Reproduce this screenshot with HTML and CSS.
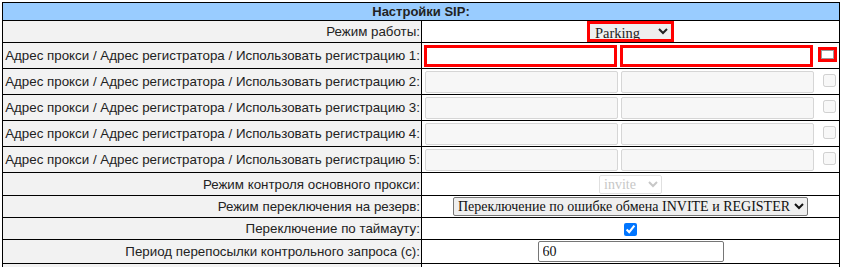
FILE: index.html
```html
<!DOCTYPE html>
<html>

<head>
  <title>Настройки SIP</title>
  <link rel="stylesheet" href="styles.css">
</head>

<body>
  <table class="settings">
    <colgroup>
      <col class="col-label">
      <col class="col-value">
    </colgroup>
    <tr class="row-head">
      <th colspan="2">Настройки SIP:</th>
    </tr>
    <tr class="row-mode">
      <td class="label">Режим работы:</td>
      <td class="value">
        <select class="mode-select">
          <option>Parking</option>
        </select>
      </td>
    </tr>
    <tr class="row-addr">
      <td class="label">Адрес прокси / Адрес регистратора / Использовать регистрацию 1:</td>
      <td class="value">
        <div class="addr-line">
          <input type="text" class="addr required">
          <input type="text" class="addr required">
          <input type="checkbox" class="reg-check">
        </div>
      </td>
    </tr>
    <tr class="row-addr">
      <td class="label">Адрес прокси / Адрес регистратора / Использовать регистрацию 2:</td>
      <td class="value">
        <div class="addr-line">
          <input type="text" class="addr" disabled>
          <input type="text" class="addr" disabled>
          <input type="checkbox" class="off-check" disabled>
        </div>
      </td>
    </tr>
    <tr class="row-addr">
      <td class="label">Адрес прокси / Адрес регистратора / Использовать регистрацию 3:</td>
      <td class="value">
        <div class="addr-line">
          <input type="text" class="addr" disabled>
          <input type="text" class="addr" disabled>
          <input type="checkbox" class="off-check" disabled>
        </div>
      </td>
    </tr>
    <tr class="row-addr">
      <td class="label">Адрес прокси / Адрес регистратора / Использовать регистрацию 4:</td>
      <td class="value">
        <div class="addr-line">
          <input type="text" class="addr" disabled>
          <input type="text" class="addr" disabled>
          <input type="checkbox" class="off-check" disabled>
        </div>
      </td>
    </tr>
    <tr class="row-addr">
      <td class="label">Адрес прокси / Адрес регистратора / Использовать регистрацию 5:</td>
      <td class="value">
        <div class="addr-line">
          <input type="text" class="addr" disabled>
          <input type="text" class="addr" disabled>
          <input type="checkbox" class="off-check" disabled>
        </div>
      </td>
    </tr>
    <tr class="row-control">
      <td class="label">Режим контроля основного прокси:</td>
      <td class="value">
        <select class="invite-select" disabled>
          <option>invite</option>
        </select>
      </td>
    </tr>
    <tr class="row-small">
      <td class="label">Режим переключения на резерв:</td>
      <td class="value">
        <select class="switch-select">
          <option>Переключение по ошибке обмена INVITE и REGISTER</option>
        </select>
      </td>
    </tr>
    <tr class="row-small">
      <td class="label">Переключение по таймауту:</td>
      <td class="value">
        <input type="checkbox" class="on-check" checked>
      </td>
    </tr>
    <tr class="row-period">
      <td class="label">Период перепосылки контрольного запроса (с):</td>
      <td class="value">
        <input type="text" class="period" value="60">
      </td>
    </tr>
    <tr class="row-period">
      <td class="label"></td>
      <td class="value"></td>
    </tr>
  </table>
</body>

</html>
```

FILE: styles.css
```css
* {
  box-sizing: border-box;
}

body {
  margin: 2px 3px 0 2px;
  font-family: "Liberation Sans", Arial, sans-serif;
  font-size: 13.33px;
  color: #222;
  background-color: #fff;
}

.settings {
  width: 838px;
  border-collapse: collapse;
  table-layout: fixed;
}

.col-label {
  width: 419px;
}

.settings th,
.settings td {
  border: 1px solid #000;
  padding: 0 1px;
  vertical-align: middle;
}

.settings th {
  background-color: #99ccff;
  font-size: 13px;
  font-weight: bold;
  text-align: center;
  height: 18px;
  line-height: 15px;
}

.label {
  background-color: #f2f2f2;
  text-align: right;
  white-space: nowrap;
}

.value {
  background-color: #fff;
  text-align: center;
}

.row-mode td {
  height: 22px;
}

.row-addr td {
  height: 26px;
}

.row-control td {
  height: 23px;
}

.row-small td {
  height: 22px;
}

.row-period td {
  height: 24px;
}

/* form controls */
input,
select {
  font-family: "Liberation Serif", "Times New Roman", serif;
  font-size: 14px;
  margin: 0;
  vertical-align: middle;
}

.addr-line {
  display: flex;
  align-items: center;
  justify-content: center;
  gap: 3px;
}

.addr {
  width: 193px;
  height: 22px;
  padding: 0 3px;
  border: 1px solid #767676;
  border-radius: 2px;
}

.addr.required {
  border: 3px solid #ff0000;
  border-radius: 0;
}

.addr:disabled {
  background-color: #f7f7f7;
  border-color: #d6d6d6;
}

.reg-check {
  appearance: none;
  width: 19px;
  height: 15px;
  margin: 0 0 3px 2px;
  border: 3px solid #ff0000;
  background-color: #fff;
  box-shadow: inset 0 0 0 1px #9a9a9a;
}

.off-check {
  width: 13px;
  height: 13px;
  margin: 0 0 2px 6px;
}

.on-check {
  width: 13px;
  height: 13px;
  margin: 0;
  accent-color: #0075ff;
}

.mode-select {
  width: 87px;
  height: 21px;
  padding: 0 0 0 1px;
  border: 3px solid #ff0000;
  border-radius: 0;
  font-size: 14.5px;
  color: #222;
}

.invite-select {
  width: 63px;
  height: 19px;
  padding: 0;
  color: #b0b0b0;
  border: 1px solid #d4d4d4;
  border-radius: 2px;
  background-color: #fff;
}

.switch-select {
  width: 355px;
  height: 19px;
  padding: 0;
  border: 1px solid #767676;
  border-radius: 2px;
  color: #111;
}

.period {
  width: 186px;
  height: 21px;
  padding: 0 4px;
  border: 1px solid #767676;
  border-radius: 2px;
  color: #111;
}
```
